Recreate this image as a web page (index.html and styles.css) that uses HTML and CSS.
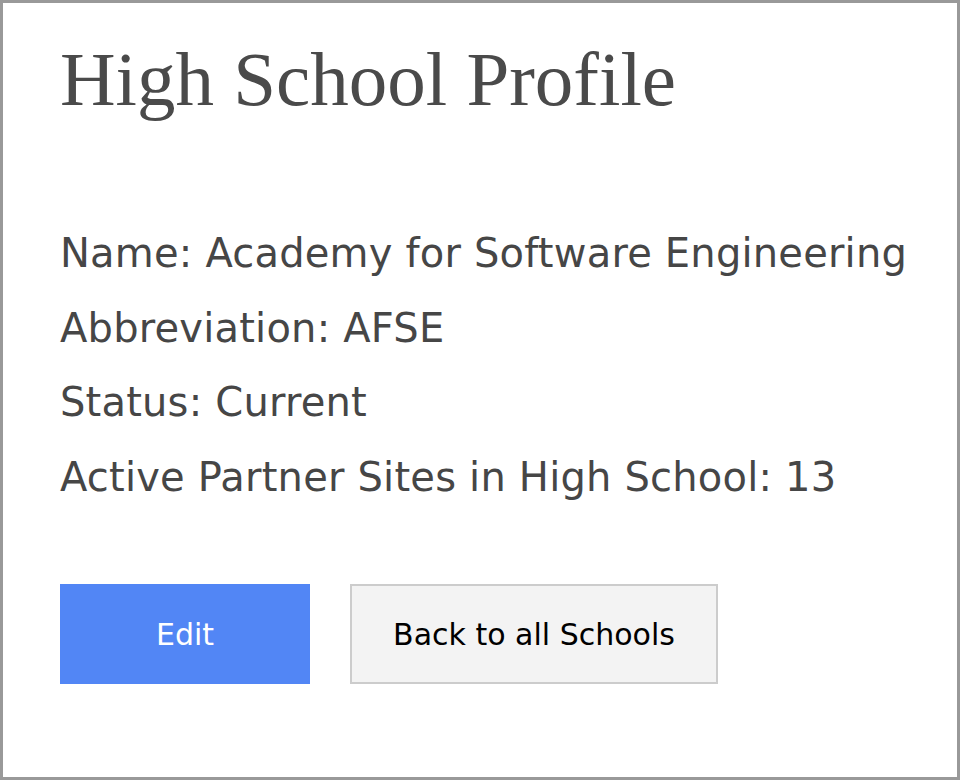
FILE: index.html
```html
<!DOCTYPE html>
<html>
<head>
<meta charset="utf-8">
<link rel="stylesheet" href="styles.css">
</head>
<body>
<main class="page">
  <h1 class="title">High School Profile</h1>
  <section class="details">
    <p class="detail">Name: Academy for Software Engineering</p>
    <p class="detail">Abbreviation: AFSE</p>
    <p class="detail">Status: Current</p>
    <p class="detail">Active Partner Sites in High School: 13</p>
  </section>
  <div class="actions">
    <button class="btn btn-primary">Edit</button>
    <button class="btn btn-secondary">Back to all Schools</button>
  </div>
</main>
</body>
</html>
```
FILE: styles.css
```css
html, body {
  margin: 0;
  padding: 0;
  background: #fff;
}
.page {
  box-sizing: border-box;
  width: 960px;
  height: 780px;
  border: 3px solid #999;
  padding: 38px 20px 0 57px;
  display: flex;
  flex-direction: column;
  align-items: flex-start;
}
.title {
  margin: 0;
  font-family: "Liberation Serif", serif;
  font-weight: normal;
  font-size: 77px;
  line-height: 77px;
  color: #4a4a4a;
}
.details {
  margin-top: 111px;
  display: flex;
  flex-direction: column;
  gap: 26.5px;
}
.detail {
  margin: 0;
  font-family: "DejaVu Sans", sans-serif;
  font-size: 40px;
  line-height: 48px;
  letter-spacing: 0.2px;
  white-space: nowrap;
  color: #464646;
}
.actions {
  margin-top: 83.5px;
  display: flex;
  gap: 40px;
}
.btn {
  box-sizing: border-box;
  height: 100px;
  font-family: "DejaVu Sans", sans-serif;
  font-size: 30px;
  padding: 0;
  margin: 0;
  cursor: pointer;
}
.btn-primary {
  width: 250px;
  background: #5286f5;
  color: #fff;
  border: none;
}
.btn-secondary {
  width: 368px;
  background: #f3f3f3;
  color: #000;
  border: 2px solid #cccccc;
}
```
